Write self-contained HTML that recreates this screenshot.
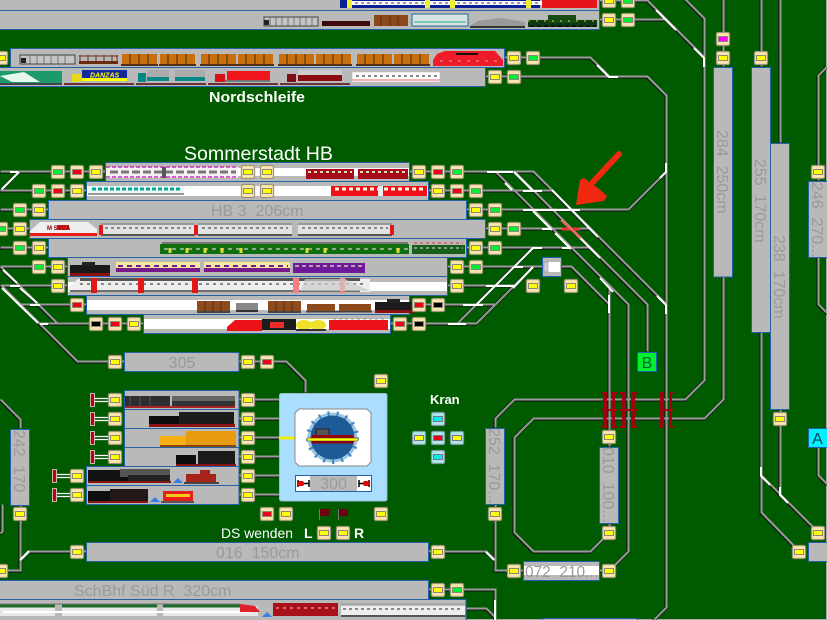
<!DOCTYPE html>
<html><head><meta charset="utf-8"><style>
html,body{margin:0;padding:0;width:827px;height:620px;overflow:hidden;background:#005a00}
svg{display:block;font-family:"Liberation Sans",sans-serif}
.b{fill:#b9b9b9;stroke:#2461a8;stroke-width:1}
.w{fill:#fff}
.l{fill:#9a9a9a;font-size:16px;white-space:pre}
.t{fill:#fff}
</style></head><body>
<svg width="827" height="620" viewBox="0 0 827 620" xmlns="http://www.w3.org/2000/svg">
<defs>
<path id="tr" fill="none" stroke-linejoin="miter" d="M599 1H647L704 58M599 20H665M685 0L704 19V381L685 400H514L495 419V428M723 0V67M723 277V400L704 419H533L514 438V533L533 552H590L609 533M761 0V67M761 332V513L799 552M761 476L818 533M780 0V143M780 409V495M827 67L818 76V181M818 257V305L827 314M818 447V476L827 485M504 58H590L609 77H647L666 96V608L647 627M485 77H609M628 210L666 172M409 172H533L666 305M514 172L647 305V352M495 172L628 305V552L609 571M428 191H552M466 210H628M485 229H590M466 248H590M447 267H571L609 305V447M609 288V305M447 286H514M409 305H495M390 324H476L533 267M457 324L533 248M609 523V533M599 571H609M0 172H105M0 191H86M0 210H48M0 229H29M0 248H48M0 267H67M0 286H67M20 305H86M39 324H143M19 172L0 191M0 267L57 324M1 286L77 362H124M239 362H286L305 381V393M239 400H280M239 419H280M239 457H280M239 476H280M239 495H280M239 438H280M0 400L20 420V429M20 505V571H0M86 552H29L20 561M2 505V532L0 534M428 590H495V620M466 609H486L495 618M428 552H486L495 561M495 505V571H523"/>
<g id="sb"><rect x="-6.5" y="-6.5" width="13" height="13" rx="1.5" fill="#fde6ae" stroke="#9c9578" stroke-width="1.3"/><rect x="-5" y="-3" width="10" height="6" fill="#8a8a78"/></g>
<g id="y"><use href="#sb"/><rect x="-4" y="-2" width="8" height="4" fill="#ff0"/></g>
<g id="g"><use href="#sb"/><rect x="-4" y="-2" width="8" height="4" fill="#0e3"/></g>
<g id="r"><use href="#sb"/><rect x="-4" y="-2" width="8" height="4" fill="#f00018"/></g>
<g id="k"><use href="#sb"/><rect x="-4" y="-2" width="8" height="4" fill="#000"/></g>
<g id="m"><use href="#sb"/><rect x="-4" y="-2" width="8" height="4" fill="#f0f"/></g>
<g id="cb"><rect x="-6.5" y="-6.5" width="13" height="13" rx="1.5" fill="#aee8ee" stroke="#7a9a9a" stroke-width="1.3"/><rect x="-5" y="-3" width="10" height="6" fill="#778"/></g>
<g id="cc"><use href="#cb"/><rect x="-4" y="-2" width="8" height="4" fill="#0ee"/></g>
<g id="cy"><use href="#cb"/><rect x="-4" y="-2" width="8" height="4" fill="#ff0"/></g>
<g id="cr"><use href="#cb"/><rect x="-4" y="-2" width="8" height="4" fill="#f00018"/></g>
<g id="log"><rect x="0" y="-6" width="35" height="10" fill="#c8700f"/><path d="M8-6v10M17-6v10M26-6v10" stroke="#7a4008" stroke-width="1.5"/><rect x="-1" y="4" width="37" height="2" fill="#553018"/></g>
<g id="box"><rect x="0" y="-6" width="33" height="10" fill="#8d4a1c"/><path d="M8-6v10M16-6v10M24-6v10" stroke="#5d2c10"/><rect x="0" y="4" width="33" height="2" fill="#444"/></g>
<g id="sw"><rect x="0" y="-4" width="94" height="9" fill="#e2e2e2"/><rect x="0" y="-6" width="94" height="2" fill="#999"/><path d="M4-1H90" stroke="#888" stroke-width="2" stroke-dasharray="3 3"/><rect x="0" y="5" width="94" height="2" fill="#555"/></g>
<g id="steam"><rect x="0" y="-5" width="40" height="8" fill="#1a1a1a"/><rect x="12" y="-8" width="13" height="4" fill="#222"/><rect x="0" y="3" width="40" height="3" fill="#8c1010"/></g>
</defs>

<rect width="827" height="620" fill="#005a00"/>
<rect x="826" y="0" width="1" height="620" fill="#aaa"/><rect x="0" y="619" width="827" height="1" fill="#aaa"/>

<!-- tracks -->
<use href="#tr" stroke="#111" stroke-width="3"/>
<use href="#tr" stroke="#9a9a9a" stroke-width="2" transform="translate(.5,-.5)"/>

<!-- white highlights -->
<path fill="none" stroke="#fff" stroke-width="2" d="M656 10L676 30M694 48L704 58V67M597 65L609 77H618M10 172H18M19 172L2 189M3 270L17 283M10 286H20M20 288L37 303M2 288L38 323M30 305H40M40 324H48M487 172H513M505 183L512 190M533 211L552 230M555 233L571 249M600 278L613 292M514 172L533 191M571 229L600 258M552 190L598 237M657 296L666 305V314M666 163V172L660 178M523 191H542M523 210H562M562 210H580M542 229H552M532 248H542M562 248H570M533 248L476 305M533 267L513 288M486 286H514M514 267H523M463 305H483M448 324H466M609 295V313M486 552L494 560M20 560L29 551M495 600V620M761 467V476L770 485M780 487V495L788 503"/>
<!-- red highlight at crossing -->
<path d="M562 229H580" stroke="#e33" stroke-width="3"/><path d="M561 220L581 238" stroke="#e66" stroke-width="2.5"/>

<!-- blocks -->
<rect class="b" x="-5" y="-9" width="604.5" height="19.5"/>
<rect class="b" x="-5" y="10.5" width="604.5" height="19"/>
<rect class="b" x="10.5" y="48.5" width="494" height="19"/>
<rect class="b" x="-5" y="67.5" width="490.5" height="19"/>
<rect class="b" x="105.5" y="162.5" width="304" height="19"/><rect class="w" x="106" y="168" width="303" height="8"/>
<rect class="b" x="86.5" y="181.5" width="342" height="19"/><rect class="w" x="87" y="186" width="341" height="10"/>
<rect class="b" x="48.5" y="200.5" width="418" height="19"/>
<rect class="b" x="29.5" y="219.5" width="456" height="19"/>
<rect class="b" x="48.5" y="238.5" width="418" height="19"/>
<rect class="b" x="67.5" y="257.5" width="380" height="19"/>
<rect class="b" x="67.5" y="276.5" width="380" height="19"/><rect class="w" x="68" y="282" width="379" height="9"/>
<rect class="b" x="86.5" y="295.5" width="323" height="19"/><rect class="w" x="87" y="300" width="322" height="10"/>
<rect class="b" x="143.5" y="314.5" width="247" height="19"/><rect class="w" x="144" y="319" width="246" height="10"/>
<rect class="b" x="124.5" y="352.5" width="114.5" height="19"/>
<rect class="b" x="124.5" y="390.5" width="114.5" height="19"/>
<rect class="b" x="124.5" y="409.5" width="114.5" height="19"/>
<rect class="b" x="124.5" y="428.5" width="114.5" height="19"/>
<rect class="b" x="124.5" y="447.5" width="114.5" height="19"/>
<rect class="b" x="86.5" y="466.5" width="152.5" height="19"/>
<rect class="b" x="86.5" y="485.5" width="152.5" height="19"/>
<rect class="b" x="86.5" y="542.5" width="342" height="19"/>
<rect class="b" x="-5" y="580.5" width="433.5" height="19"/>
<rect class="b" x="-5" y="599.5" width="471" height="25"/>
<rect class="b" x="542.5" y="618.5" width="95" height="6"/>
<rect class="b" x="523.5" y="561.5" width="76" height="19"/><rect class="w" x="524" y="566" width="75" height="9"/>
<rect class="b" x="713.5" y="67.5" width="19" height="209.5"/>
<rect class="b" x="751.5" y="67.5" width="19" height="265"/>
<rect class="b" x="770.5" y="143.5" width="19" height="266"/>
<rect class="b" x="808.5" y="181.5" width="24" height="76"/>
<rect class="b" x="485.5" y="428.5" width="19" height="76"/>
<rect class="b" x="599.5" y="447.5" width="19" height="76"/>
<rect class="b" x="10.5" y="429.5" width="19" height="76"/>
<rect class="b" x="808.5" y="542.5" width="24" height="19"/>
<rect class="b" x="542.5" y="257.5" width="19" height="19"/>
<rect x="544" y="262" width="16" height="10" fill="#fff"/><rect x="544" y="262" width="4" height="10" fill="#ccd" stroke="#888" stroke-width=".5"/>

<!-- trains rows 1 / 20 -->
<rect x="340" y="0" width="200" height="8" fill="#0a1f96"/><rect x="352" y="1" width="190" height="4" fill="#fff"/><path d="M355 3H538" stroke="#777" stroke-width="1.5" stroke-dasharray="3 3"/><rect x="347" y="0" width="5" height="8" fill="#ee3"/><rect x="425" y="0" width="5" height="8" fill="#ee3"/><rect x="450" y="0" width="5" height="8" fill="#ee3"/><rect x="526" y="0" width="5" height="8" fill="#ee3"/>
<rect x="542" y="0" width="55" height="8" fill="#e8141c"/>
<rect x="264" y="17" width="54" height="9" fill="#c4c4c4" stroke="#444" stroke-width="1"/><rect x="264" y="20" width="5" height="5" fill="#222"/><path d="M270 17v9M276 17v9M282 17v9M288 17v9M294 17v9M300 17v9M306 17v9M312 17v9" stroke="#555" stroke-width=".7"/>
<rect x="322" y="21" width="48" height="5" fill="#3e0a0a"/>
<rect x="374" y="15" width="34" height="11" fill="#8c4a1c"/><path d="M381 15v11M390 15v11M398 15v11" stroke="#5c2c10"/>
<rect x="412" y="14" width="56" height="12" fill="#d8e4e4" stroke="#269" stroke-width="1"/><path d="M414 22H466" stroke="#2a8" stroke-width="1"/>
<path d="M470 26L478 21L500 18L525 22V26Z" fill="#999"/><rect x="470" y="26" width="55" height="2" fill="#333"/>
<rect x="528" y="20" width="69" height="7" fill="#0e3a12"/><rect x="548" y="15" width="28" height="8" fill="#174c17"/><path d="M530 26H596" stroke="#111" stroke-width="2" stroke-dasharray="4 3"/><path d="M528 21H597" stroke="#dd3" stroke-width="1" stroke-dasharray="2 6"/>

<!-- row 58 -->
<rect x="20" y="55" width="55" height="9" fill="#c4c4c4" stroke="#444" stroke-width="1"/><rect x="21" y="58" width="5" height="5" fill="#222"/><path d="M30 55v9M37 55v9M44 55v9M51 55v9M58 55v9M65 55v9" stroke="#555" stroke-width=".7"/>
<rect x="79" y="61" width="39" height="3" fill="#6a2c10"/><path d="M80 55v7M88 55v7M96 55v7M104 55v7M112 55v7M117 55v7" stroke="#6a2c10"/><path d="M79 56H118" stroke="#6a2c10"/>
<use href="#log" x="122" y="60"/><use href="#log" x="160" y="60"/><use href="#log" x="201" y="60"/><use href="#log" x="238" y="60"/><use href="#log" x="279" y="60"/><use href="#log" x="316" y="60"/><use href="#log" x="357" y="60"/><use href="#log" x="394" y="60"/>
<path d="M433 60L437 54L445 51H495L503 60V66H433Z" fill="#ee1c28"/><rect x="456" y="53" width="22" height="2" fill="#111"/><path d="M440 61H498" stroke="#fcc" stroke-width=".8" stroke-dasharray="3 6"/>

<!-- row 77 -->
<path d="M0 71H62V83H0Z" fill="#1c9a6c"/><path d="M0 76L24 72L40 82H12Z" fill="#e6f8ee"/><rect x="0" y="83" width="62" height="2" fill="#445"/>
<rect x="82" y="70" width="45" height="9" fill="#1428a0"/><text x="90" y="77.5" font-size="7" font-weight="bold" font-style="italic" fill="#ff0">DANZAS</text><rect x="82" y="78" width="45" height="3" fill="#ff0"/><rect x="72" y="74" width="9" height="8" fill="#e8d818"/><rect x="64" y="83" width="70" height="2" fill="#6b3038"/>
<rect x="147" y="70" width="22" height="8" fill="#aaa"/><rect x="175" y="70" width="30" height="8" fill="#aaa"/><rect x="147" y="77" width="22" height="4" fill="#0a8888"/><rect x="175" y="77" width="30" height="4" fill="#0a8888"/><rect x="138" y="73" width="8" height="9" fill="#088"/><rect x="136" y="83" width="70" height="2" fill="#6b3038"/>
<rect x="227" y="71" width="43" height="9" fill="#f0141c"/><rect x="215" y="74" width="10" height="8" fill="#d81018"/><rect x="225" y="80" width="45" height="2" fill="#777"/><rect x="208" y="83" width="70" height="2" fill="#6b3038"/>
<rect x="298" y="70" width="44" height="5" fill="#ccc"/><rect x="298" y="75" width="44" height="6" fill="#8a0c10"/><rect x="287" y="74" width="9" height="8" fill="#7a1014"/><rect x="280" y="83" width="70" height="2" fill="#6b3038"/>
<rect x="352" y="72" width="88" height="10" fill="#fff" stroke="#bbb" stroke-width=".6"/><path d="M356 76H438" stroke="#888" stroke-width="2" stroke-dasharray="3 3"/><path d="M352 80H440" stroke="#e33" stroke-width=".8"/>

<!-- row 172 -->
<rect x="106" y="167" width="132" height="11" fill="#f4f0f4"/><path d="M106 167H238M106 177H238" stroke="#d22dc8" stroke-width="1.5" stroke-dasharray="4 2"/><path d="M110 172H236" stroke="#777" stroke-width="3" stroke-dasharray="8 3"/><rect x="162" y="167" width="4" height="11" fill="#555"/>
<rect x="306" y="169" width="48" height="10" fill="#a80c18"/><path d="M308 172H352" stroke="#ddb" stroke-width="2" stroke-dasharray="3 3"/><rect x="358" y="169" width="50" height="10" fill="#a80c18"/><path d="M360 172H406" stroke="#ddb" stroke-width="2" stroke-dasharray="3 3"/>

<!-- row 191 -->
<rect x="88" y="186" width="96" height="9" fill="#e8f8f6"/><path d="M92 189H182" stroke="#0aa69a" stroke-width="3" stroke-dasharray="4 2"/><rect x="88" y="193" width="96" height="2" fill="#999"/>
<rect x="331" y="186" width="96" height="10" fill="#f2111a"/><path d="M335 189H424" stroke="#ffd" stroke-width="3" stroke-dasharray="4 3"/><rect x="378" y="186" width="5" height="10" fill="#eee"/>

<!-- row 229 -->
<path d="M30 231L40 222H88L97 229V236H30Z" fill="#efefef"/><rect x="30" y="233" width="67" height="3" fill="#e81c1c"/><rect x="57" y="225" width="12" height="5" fill="#c22"/><text x="47" y="230" font-size="6" fill="#900" font-weight="bold">M  SVCA</text>
<use href="#sw" x="101" y="229"/><use href="#sw" x="198" y="229"/><use href="#sw" x="298" y="229"/>
<rect x="99" y="225" width="4" height="10" fill="#e01818"/><rect x="194" y="225" width="4" height="10" fill="#e01818"/><rect x="390" y="225" width="4" height="10" fill="#e01818"/>

<!-- row 248 -->
<rect x="160" y="244" width="249" height="10" fill="#0e6e10"/><path d="M162 243H408" stroke="#777" stroke-width="2"/><path d="M164 249H408" stroke="#8a8" stroke-width="2" stroke-dasharray="4 4"/><path d="M170 248v5M187 248v5M205 248v5M222 248v5M241 248v5M307 248v5M325 248v5M398 248v5" stroke="#dd3" stroke-width="3"/>
<rect x="412" y="245" width="53" height="9" fill="#155f1a"/><path d="M414 243H463" stroke="#c33" stroke-width="1" stroke-dasharray="3 3"/><path d="M414 248H463" stroke="#9b9" stroke-width="1.5" stroke-dasharray="3 3"/>

<!-- row 267 -->
<use href="#steam" x="70" y="270"/>
<rect x="116" y="262" width="84" height="10" fill="#f2e8a0"/><rect x="116" y="268" width="84" height="4" fill="#7a1a8a"/><path d="M118 266H198" stroke="#7a1a8a" stroke-width="2" stroke-dasharray="5 4"/>
<rect x="204" y="262" width="86" height="10" fill="#f2e8a0"/><rect x="204" y="268" width="86" height="4" fill="#7a1a8a"/><path d="M206 266H288" stroke="#7a1a8a" stroke-width="2" stroke-dasharray="5 4"/>
<rect x="293" y="263" width="72" height="10" fill="#6e1a9a"/><path d="M295 266H363" stroke="#ccb" stroke-width="1.5" stroke-dasharray="4 3"/>

<!-- row 286 -->
<path d="M68 288L78 279H370V292H68Z" fill="#eee"/><rect x="80" y="278" width="280" height="3" fill="#555"/><path d="M80 284H365" stroke="#888" stroke-width="2" stroke-dasharray="3 4"/><path d="M70 291H360" stroke="#444" stroke-width="1.5"/>
<rect x="91" y="278" width="6" height="15" fill="#e01818"/><rect x="138" y="278" width="6" height="15" fill="#e01818"/><rect x="192" y="278" width="6" height="15" fill="#e01818"/><rect x="293" y="278" width="6" height="15" fill="#f08080"/><rect x="340" y="278" width="5" height="15" fill="#f08080"/>
<path d="M305 279H345L370 291H300Z" fill="#ccc" fill-opacity=".7"/>

<!-- row 305 -->
<use href="#box" x="197" y="307"/><rect x="236" y="303" width="22" height="7" fill="#888"/><rect x="236" y="310" width="22" height="2" fill="#333"/>
<use href="#box" x="268" y="307"/><rect x="307" y="304" width="28" height="7" fill="#8d4a1c"/><rect x="339" y="304" width="32" height="7" fill="#8d4a1c"/><use href="#steam" x="375" y="307"/>
<rect x="306" y="311" width="66" height="1.5" fill="#444"/>

<!-- row 324 -->
<path d="M227 327L235 320H262V331H227Z" fill="#ee111a"/><rect x="262" y="319" width="34" height="11" fill="#1c1c1c"/><rect x="270" y="322" width="14" height="6" fill="#ee2a2a"/>
<ellipse cx="304" cy="325" rx="8" ry="5" fill="#efe02a"/><ellipse cx="318" cy="325" rx="8" ry="5" fill="#efe02a"/><rect x="296" y="329" width="30" height="2" fill="#333"/>
<rect x="329" y="320" width="59" height="10" fill="#ee111a"/><path d="M333 319H384" stroke="#999" stroke-width="1" stroke-dasharray="3 3"/>

<!-- turntable rows trains -->
<rect x="125" y="396" width="45" height="10" fill="#2e2e2e"/><path d="M130 396v10M140 396v10M150 396v10" stroke="#555"/><rect x="172" y="396" width="63" height="10" fill="#666"/><rect x="172" y="401" width="63" height="5" fill="#333"/><rect x="125" y="406" width="110" height="2" fill="#a22"/>
<rect x="149" y="416" width="30" height="9" fill="#0e0e0e"/><rect x="179" y="412" width="55" height="13" fill="#1c1c1c"/><rect x="149" y="424" width="86" height="3" fill="#8a1414"/>
<rect x="160" y="436" width="26" height="9" fill="#f6b014"/><rect x="186" y="431" width="50" height="14" fill="#e89a10"/><rect x="160" y="445" width="76" height="2" fill="#8a4808"/>
<rect x="176" y="455" width="20" height="9" fill="#0e0e0e"/><rect x="198" y="451" width="37" height="13" fill="#1a1a1a"/><rect x="176" y="464" width="60" height="2" fill="#8a1414"/>
<rect x="88" y="470" width="40" height="11" fill="#111"/><rect x="120" y="469" width="50" height="8" fill="#555"/><rect x="128" y="475" width="42" height="7" fill="#222"/><rect x="88" y="481" width="83" height="2" fill="#8a1414"/>
<path d="M173 483L178 478L183 483Z" fill="#3a7ce8"/>
<rect x="186" y="474" width="30" height="9" fill="#a82418"/><rect x="200" y="470" width="10" height="6" fill="#a82418"/><rect x="184" y="482" width="35" height="2" fill="#444"/>
<rect x="88" y="491" width="22" height="11" fill="#0e0e0e"/><rect x="110" y="489" width="38" height="12" fill="#241818"/><rect x="88" y="501" width="60" height="2" fill="#8a1414"/>
<path d="M150 502L155 497L160 502Z" fill="#3a7ce8"/>
<rect x="163" y="491" width="30" height="10" fill="#e42018"/><rect x="166" y="494" width="24" height="3" fill="#f4c818"/><rect x="161" y="501" width="33" height="2" fill="#555"/>

<!-- bottom row trains -->
<rect x="0" y="606" width="55" height="10" fill="#e8e8e8"/><rect x="62" y="606" width="95" height="10" fill="#e8e8e8"/><rect x="163" y="606" width="95" height="10" fill="#e8e8e8"/>
<path d="M0 606H55M62 606H157M163 606H240" stroke="#1b6a2a" stroke-width="3"/><path d="M0 604H240" stroke="#777" stroke-width="1"/><path d="M3 612H250" stroke="#fff" stroke-width="2"/>
<path d="M240 604L255 606L260 612H240Z" fill="#e0202a"/>
<path d="M262 617L267 612L272 617Z" fill="#3a7ce8"/>
<rect x="273" y="603" width="65" height="13" fill="#a8101a"/><path d="M276 608H335" stroke="#e88" stroke-width="1.5" stroke-dasharray="3 4"/>
<rect x="341" y="606" width="124" height="9" fill="#eee"/><path d="M343 609H463" stroke="#888" stroke-width="2" stroke-dasharray="3 3"/><path d="M341 604H465" stroke="#999"/><rect x="341" y="615" width="124" height="2" fill="#555"/>

<!-- bumpers -->
<g fill="none" stroke="#fff" stroke-width="1.2">
<path d="M95 398.5H108M95 401.5H108M95 417.5H108M95 420.5H108M95 436.5H108M95 439.5H108M95 455.5H108M95 458.5H108M57 474.5H70M57 477.5H70M57 493.5H70M57 496.5H70"/></g>
<g fill="#c00010" stroke="#f4f4f4" stroke-width=".7">
<rect x="90.5" y="393.5" width="4" height="13"/><rect x="90.5" y="412.5" width="4" height="13"/><rect x="90.5" y="431.5" width="4" height="13"/><rect x="90.5" y="450.5" width="4" height="13"/><rect x="52.5" y="469.5" width="4" height="13"/><rect x="52.5" y="488.5" width="4" height="13"/></g>

<!-- turntable -->
<rect x="279.5" y="393.5" width="107.5" height="107.5" rx="2" fill="#aadeff" stroke="#9abccc"/>
<path d="M279 438H295" stroke="#ee0" stroke-width="3"/>
<path d="M299 409H367L371 413V462L367 466H299L295 462V413Z" fill="#fff" stroke="#888"/>
<circle cx="332.5" cy="437.5" r="25" fill="#9ec6dc"/>
<circle cx="332.5" cy="437.5" r="24" fill="none" stroke="#3f85c8" stroke-width="5" stroke-dasharray="2 7"/>
<circle cx="332.5" cy="437.5" r="22" fill="#1f5a98"/>
<rect x="316" y="429" width="13" height="8" fill="#555" stroke="#222"/>
<rect x="312" y="435" width="41" height="3" fill="#9a0010"/>
<rect x="307" y="438" width="51" height="3" fill="#ff0" stroke="#333" stroke-width=".5"/>
<rect x="312" y="441" width="41" height="2.5" fill="#8a0014"/>
<rect x="295.5" y="475.5" width="76" height="16" fill="#fff" stroke="#2461a8"/>
<rect x="310" y="476" width="47" height="15" fill="#b9b9b9"/>
<text class="l" x="333.5" y="489" text-anchor="middle">300</text>
<path d="M298 480v7M298 483.5h11M309 480v7" stroke="#000" stroke-width="1.5" fill="none"/><rect x="298" y="481" width="6" height="5" rx="2" fill="#e00"/>
<path d="M359 480v7M359 483.5h9M369 480v7" stroke="#000" stroke-width="1.5" fill="none"/><rect x="363" y="481" width="6" height="5" rx="2" fill="#e00"/>

<!-- flags -->
<rect x="319" y="509" width="1" height="11" fill="#777"/><rect x="320" y="509" width="9" height="7" fill="#6e0014"/>
<rect x="338" y="509" width="1" height="11" fill="#777"/><rect x="339" y="509" width="9" height="7" fill="#6e0014"/>

<!-- red ties -->
<g fill="#a00010">
<rect x="603" y="392" width="4" height="36"/><rect x="612" y="392" width="3" height="36"/>
<rect x="622" y="392" width="4" height="36"/><rect x="631" y="392" width="4" height="36"/>
<rect x="660" y="392" width="4" height="36"/><rect x="669" y="392" width="3" height="36"/>
<path d="M601 392h6v2h-6zM612 392h5v2h-5zM601 426h6v2h-6zM612 426h5v2h-5zM620 392h6v2h-6zM631 392h6v2h-6zM620 426h6v2h-6zM631 426h6v2h-6zM659 392h5v2h-5zM669 392h5v2h-5zM659 426h5v2h-5zM669 426h5v2h-5zM601 409h16v2h-16zM620 409h17v2h-17zM659 409h15v2h-15z"/>
</g>

<!-- signals -->
<use href="#y" x="609" y="1"/><use href="#g" x="628" y="1"/><use href="#y" x="609" y="20"/><use href="#g" x="628" y="20"/>
<use href="#y" x="1" y="58"/><use href="#y" x="514" y="58"/><use href="#g" x="533" y="58"/><use href="#y" x="495" y="77"/><use href="#g" x="514" y="77"/>
<use href="#m" x="723" y="39"/><use href="#y" x="723" y="58"/><use href="#y" x="761" y="58"/><use href="#y" x="818" y="172"/><use href="#y" x="780" y="419"/><use href="#y" x="799" y="552"/><use href="#y" x="818" y="533"/>
<use href="#g" x="58" y="172"/><use href="#r" x="77" y="172"/><use href="#y" x="96" y="172"/>
<use href="#g" x="39" y="191"/><use href="#r" x="58" y="191"/><use href="#y" x="77" y="191"/>
<use href="#g" x="20" y="210"/><use href="#y" x="39" y="210"/>
<use href="#g" x="1" y="229"/><use href="#y" x="20" y="229"/>
<use href="#g" x="20" y="248"/><use href="#y" x="39" y="248"/>
<use href="#g" x="39" y="267"/><use href="#y" x="58" y="267"/>
<use href="#y" x="58" y="286"/><use href="#r" x="77" y="305"/>
<use href="#k" x="96" y="324"/><use href="#r" x="115" y="324"/><use href="#y" x="134" y="324"/>
<use href="#y" x="248" y="172"/><use href="#y" x="267" y="172"/><use href="#y" x="248" y="191"/><use href="#y" x="267" y="191"/>
<use href="#y" x="419" y="172"/><use href="#r" x="438" y="172"/><use href="#g" x="457" y="172"/>
<use href="#y" x="438" y="191"/><use href="#r" x="457" y="191"/><use href="#g" x="476" y="191"/>
<use href="#y" x="476" y="210"/><use href="#g" x="495" y="210"/>
<use href="#y" x="495" y="229"/><use href="#g" x="514" y="229"/>
<use href="#y" x="476" y="248"/><use href="#g" x="495" y="248"/>
<use href="#y" x="457" y="267"/><use href="#g" x="476" y="267"/>
<use href="#y" x="457" y="286"/><use href="#r" x="419" y="305"/><use href="#k" x="438" y="305"/>
<use href="#r" x="400" y="324"/><use href="#k" x="419" y="324"/>
<use href="#y" x="533" y="286"/><use href="#y" x="571" y="286"/>
<use href="#y" x="115" y="362"/><use href="#y" x="248" y="362"/><use href="#r" x="267" y="362"/>
<use href="#y" x="115" y="400"/><use href="#y" x="115" y="419"/><use href="#y" x="115" y="438"/><use href="#y" x="115" y="457"/><use href="#y" x="77" y="476"/><use href="#y" x="77" y="495"/>
<use href="#y" x="248" y="400"/><use href="#y" x="248" y="419"/><use href="#y" x="248" y="438"/><use href="#y" x="248" y="457"/><use href="#y" x="248" y="476"/><use href="#y" x="248" y="495"/>
<use href="#y" x="381" y="381"/><use href="#y" x="381" y="514"/><use href="#r" x="267" y="514"/><use href="#y" x="286" y="514"/>
<use href="#y" x="324" y="533"/><use href="#y" x="343" y="533"/>
<use href="#cc" x="438" y="419"/><use href="#cy" x="419" y="438"/><use href="#cr" x="438" y="438"/><use href="#cy" x="457" y="438"/><use href="#cc" x="438" y="457"/>
<use href="#y" x="20" y="514"/><use href="#y" x="1" y="571"/><use href="#y" x="77" y="552"/><use href="#y" x="438" y="552"/>
<use href="#y" x="495" y="514"/><use href="#y" x="514" y="571"/><use href="#y" x="609" y="571"/><use href="#y" x="609" y="437"/><use href="#y" x="609" y="533"/>
<use href="#y" x="438" y="590"/><use href="#g" x="457" y="590"/>

<!-- A / B -->
<rect x="637.5" y="352.5" width="19" height="19" fill="#00f030" stroke="#2461a8"/>
<text x="647" y="368" font-size="16" text-anchor="middle" fill="#063">B</text>
<rect x="808.5" y="428.5" width="24" height="19" fill="#00f0ff" stroke="#2461a8"/>
<text x="817.5" y="444" font-size="16" text-anchor="middle" fill="#045">A</text>

<!-- arrow -->
<path d="M619 154L593 182" stroke="#f02810" stroke-width="6" stroke-linecap="round"/>
<path d="M576 205L580 180L584 178L592 184L598 188L607 196L604 201L590 203Z" fill="#f02810"/>

<!-- labels -->
<text class="t" x="209" y="102" font-size="15" font-weight="bold" textLength="96" lengthAdjust="spacingAndGlyphs">Nordschleife</text>
<text class="t" x="184" y="160" font-size="19.5" textLength="149" lengthAdjust="spacingAndGlyphs">Sommerstadt HB</text>
<text class="t" x="430" y="404" font-size="13" font-weight="bold">Kran</text>
<text class="t" x="221" y="538" font-size="14" textLength="72" lengthAdjust="spacingAndGlyphs">DS wenden</text>
<text class="t" x="304" y="538" font-size="14" font-weight="bold">L</text>
<text class="t" x="354" y="538" font-size="14" font-weight="bold">R</text>
<text class="l" x="211" y="216">HB 3  206cm</text>
<text class="l" x="182" y="368" text-anchor="middle">305</text>
<text class="l" x="216" y="558">016  150cm</text>
<text class="l" x="74" y="596">SchBhf Süd R  320cm</text>
<text class="l" x="525" y="577" font-size="16" textLength="73" lengthAdjust="spacingAndGlyphs">072  210...</text>
<g class="l">
<text class="l" transform="translate(717,130) rotate(90)">284  250cm</text>
<text class="l" transform="translate(755,159) rotate(90)">255  170cm</text>
<text class="l" transform="translate(774,235) rotate(90)">238  170cm</text>
<text class="l" transform="translate(812,182) rotate(90)">246  270...</text>
<text class="l" transform="translate(489,428) rotate(90)">252  170...</text>
<text class="l" transform="translate(603,447) rotate(90)">010  100...</text>
<text class="l" transform="translate(14,430) rotate(90)">242  170</text>
</g>
</svg>
</body></html>
